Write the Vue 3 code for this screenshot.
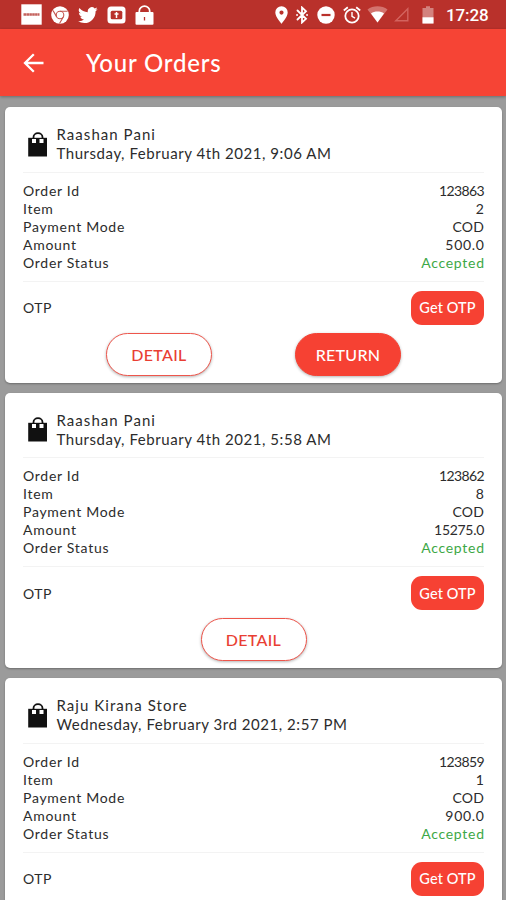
<script setup>
const orders = [
  { id: '123863', store: 'Raashan Pani', date: 'Thursday, February 4th 2021, 9:06 AM', items: 2, amount: '500.0', actions: ['DETAIL', 'RETURN'] },
  { id: '123862', store: 'Raashan Pani', date: 'Thursday, February 4th 2021, 5:58 AM', items: 8, amount: '15275.0', actions: ['DETAIL'] },
  { id: '123859', store: 'Raju Kirana Store', date: 'Wednesday, February 3rd 2021, 2:57 PM', items: 1, amount: '900.0', actions: [] },
]
</script>

<template>
  <div class="screen">
    <div class="status">
      <div class="notifications">
        <svg width="21" height="21" viewBox="0 0 21 21"><rect x="0.3" y="0.3" width="20.4" height="20.4" fill="#fff" /><path d="M2.500 10.500h16" stroke="#c4625d" stroke-width="2.4" stroke-dasharray="2.600 .3" /></svg>
        <svg width="18" height="18" viewBox="0 0 18 18"><circle cx="9" cy="9" r="8.8" fill="#fff" /><g fill="none" stroke="#c4554f" stroke-width="1.100"><circle cx="9" cy="9" r="3.8" /><path d="M9 5.2h7.6M5.7 10.9 2 4.5M12.3 10.9 8.5 17.6" /></g></svg>
        <svg width="20" height="20" viewBox="0 0 24 24"><path fill="#fff" d="M23.6 4.9c-.8.4-1.7.7-2.7.8 1-.6 1.7-1.5 2.1-2.6-.9.5-1.9.9-3 1.1a4.8 4.8 0 0 0-8.2 4.4C7.800 8.400 4.200 6.500 1.700 3.500a4.800 4.800 0 0 0 1.500 6.400c-.8 0-1.500-.2-2.200-.6v.1c0 2.300 1.700 4.200 3.900 4.700-.7.200-1.500.2-2.200.1.600 1.900 2.400 3.300 4.500 3.300A9.600 9.600 0 0 1 .1 19.500a13.600 13.600 0 0 0 7.400 2.200c8.800 0 13.900-7.400 13.600-14.300 1-.6 1.800-1.500 2.500-2.500z" /></svg>
        <svg width="19" height="18" viewBox="0 0 19 18"><rect x=".5" y=".5" width="18" height="17" rx="3.500" fill="#fff" /><rect x="3.700" y="4.700" width="11.600" height="8.600" rx="1.500" fill="#b9312b" /><path d="M9.500 6v6M7.500 8h4" stroke="#fff" stroke-width="1.500" /></svg>
        <svg width="19" height="20" viewBox="0 0 19 20"><path d="M4.300 8.500V5.900a5.200 4.800 0 0 1 10.400 0v2.600" fill="none" stroke="#fff" stroke-width="1.700" /><rect x=".5" y="7" width="18" height="12.800" rx="1" fill="#fff" /><path d="M9.500 12v3.500" stroke="#b9312b" stroke-width="1.300" /></svg>
      </div>
      <div class="indicators">
        <svg class="pin" width="13" height="18" viewBox="0 0 13 18"><path fill="#fff" fill-rule="evenodd" d="M6.500.3A6.200 6.200 0 0 0 .3 6.500C.3 11 6.500 17.700 6.500 17.700S12.700 11 12.700 6.500A6.200 6.200 0 0 0 6.500.3zm0 4.200a2.100 2.100 0 1 1 0 4.200 2.100 2.100 0 0 1 0-4.200z" /></svg>
        <svg class="bt" width="12" height="18" viewBox="0 0 12 18"><path d="M1.500 4.500 10 12.800 6 16.500v-15l4 3.700L1.500 13.500M1 9h.1M11 9h.1" fill="none" stroke="#fff" stroke-width="1.800" stroke-linecap="round" /></svg>
        <svg class="dnd" width="18" height="18" viewBox="0 0 18 18"><circle cx="9" cy="9" r="8.700" fill="#fff" /><path d="M4.500 9h9" stroke="#b9312b" stroke-width="2.200" /></svg>
        <svg class="alarm" width="18" height="18" viewBox="0 0 18 18"><g fill="none" stroke="#fff" stroke-width="1.800"><circle cx="9" cy="10" r="6.700" /><path d="M.8 4.500 4.800 1.200M17.200 4.500l-4-3.300" /><path d="M9 6v4.300l3 1.800" stroke-width="1.400" /></g></svg>
        <svg class="wifi" width="21" height="17" viewBox="0 0 21 17"><path d="M.5 3.500C6-.8 15-.8 20.500 3.500L10.500 16.500z" fill="#d3736e" /><path d="M4 7.500c3.500-2.600 9.500-2.600 13 0l-6.500 9z" fill="#fff" /></svg>
        <svg class="cell" width="15" height="15" viewBox="0 0 15 15"><path d="M1.800 13.700H13.800V1.800z" fill="none" stroke="#d3635e" stroke-width="1.400" /></svg>
        <svg class="battery" width="12" height="18" viewBox="0 0 12 18"><path d="M.5 2H4V.3h4V2h3.500v15.500H.5z" fill="#d3827e" /><path d="M.5 11.300h11v6.200H.5z" fill="#fff" /></svg>
        <span class="clock">17:28</span>
      </div>
    </div>
    <header class="bar">
      <svg width="22" height="20" viewBox="0 0 22 20"><path d="M20.500 10H2.500M10.800 1.300 2 10l8.800 8.700" fill="none" stroke="#fff" stroke-width="2.300" /></svg>
      <h1>Your Orders</h1>
    </header>
    <main class="list">
      <article v-for="o in orders" :key="o.id" class="card">
        <div class="head">
          <svg width="20" height="25" viewBox="0 0 20 25"><path d="M5.500 7V5.200a4.500 4 0 0 1 9 0V7" fill="none" stroke="#111" stroke-width="1.800" /><path d="M.2 5.800h18.800v18.700H.2z" fill="#111" /><path d="M4 7h4v4H4zM11.500 7h4v4h-4z" fill="#fff" /></svg>
          <div>
            <div class="store">{{ o.store }}</div>
            <div class="date">{{ o.date }}</div>
          </div>
        </div>
        <dl class="facts">
          <div><dt>Order Id</dt><dd class="id">{{ o.id }}</dd></div>
          <div><dt>Item</dt><dd>{{ o.items }}</dd></div>
          <div><dt>Payment Mode</dt><dd class="mode">COD</dd></div>
          <div><dt>Amount</dt><dd :class="{ long: o.amount.length > 5 }">{{ o.amount }}</dd></div>
          <div><dt>Order Status</dt><dd class="accepted">Accepted</dd></div>
        </dl>
        <div class="otp">
          <span>OTP</span>
          <button class="get">Get OTP</button>
        </div>
        <div class="actions">
          <button v-for="a in o.actions" :key="a" class="pill" :class="{ solid: a === 'RETURN' }">{{ a }}</button>
        </div>
      </article>
    </main>
  </div>
</template>

<style>
body { overflow: hidden; }
</style>

<style scoped>
.screen {
  width: 506px;
  height: 900px;
  overflow: hidden;
  display: flex;
  flex-direction: column;
  background: #9b9b9b;
  color: #2c2c2c;
  font-family: Lato, "Open Sans", sans-serif;
}
svg { display: block; flex: none; }
.status {
  flex: none;
  height: 29px;
  box-sizing: border-box;
  padding: 0 17px 0 21px;
  display: flex;
  justify-content: space-between;
  align-items: center;
  background: #b9312b;
}
.notifications, .indicators { display: flex; align-items: center; }
.notifications { gap: 9px; }
.bt { margin-left: 8px; }
.dnd { margin-left: 9px; }
.alarm { margin-left: 8px; }
.wifi { margin-left: 6px; }
.cell { margin-left: 6px; }
.battery { margin-left: 13px; }
.clock {
  width: 43px;
  margin-left: 12px;
  font: 500 17px/29px Roboto, sans-serif;
  letter-spacing: -0.1px;
  color: #fff;
  padding-top: 2px;
}
.bar {
  flex: none;
  height: 67px;
  display: flex;
  align-items: center;
  padding-left: 23px;
  gap: 41px;
  background: #f64435;
  color: #fff;
  box-shadow: 0 1px 3px rgba(0, 0, 0, 0.3);
}
h1 { margin: 0; font-size: 24px; font-weight: 500; letter-spacing: 0.8px; line-height: 30px; }
.list { padding: 11px 4px 0 5px; display: flex; flex-direction: column; gap: 10px; }
.card {
  flex: none;
  height: 275.600px;
  box-sizing: border-box;
  padding: 18.500px 18px 0;
  background: #fff;
  border-radius: 5px;
  box-shadow: 0 1px 2px rgba(0, 0, 0, 0.3);
}
.head {
  display: flex;
  align-items: center;
  gap: 8.500px;
  height: 47px;
  padding: 0 0 9px 5px;
  box-sizing: border-box;
  border-bottom: 1px solid #f3f3f3;
}
.store, .date { font-size: 15px; line-height: 19px; white-space: nowrap; }
.store { letter-spacing: 1.05px; }
.date { letter-spacing: 0.55px; }
.facts { margin: 0; padding: 9px 0; border-bottom: 1px solid #f3f3f3; }
.facts div { display: flex; justify-content: space-between; font-size: 14px; line-height: 18px; letter-spacing: 0.72px; }
dd { margin: 0 -0.700px 0 0; }
dd.id { letter-spacing: -0.600px; margin-right: 0; }
dd.long { letter-spacing: -0.300px; margin-right: 0; }
dd.mode { letter-spacing: 0.200px; margin-right: 0; }
.accepted { color: #3da846; }
.otp {
  display: flex;
  justify-content: space-between;
  align-items: center;
  margin-top: 9px;
  font-size: 14px;
  letter-spacing: 0.5px;
}
button { font-family: inherit; padding: 0; border: 0; font-weight: 500; }
.get {
  width: 73px;
  height: 34px;
  border-radius: 11px;
  background: #f64133;
  color: #fff;
  font-size: 14.500px;
  letter-spacing: 0.1px;
}
.actions { display: flex; justify-content: space-evenly; margin-top: 8px; }
.pill {
  width: 106px;
  height: 43px;
  border: 1px solid #ee554b;
  border-radius: 22px;
  background: #fff;
  color: #e93e33;
  font-size: 16px;
  letter-spacing: 0.3px;
  box-shadow: 0 1px 3px rgba(0, 0, 0, 0.3);
}
.solid { background: #f64133; color: #fff; border-color: #f64133; }
</style>
